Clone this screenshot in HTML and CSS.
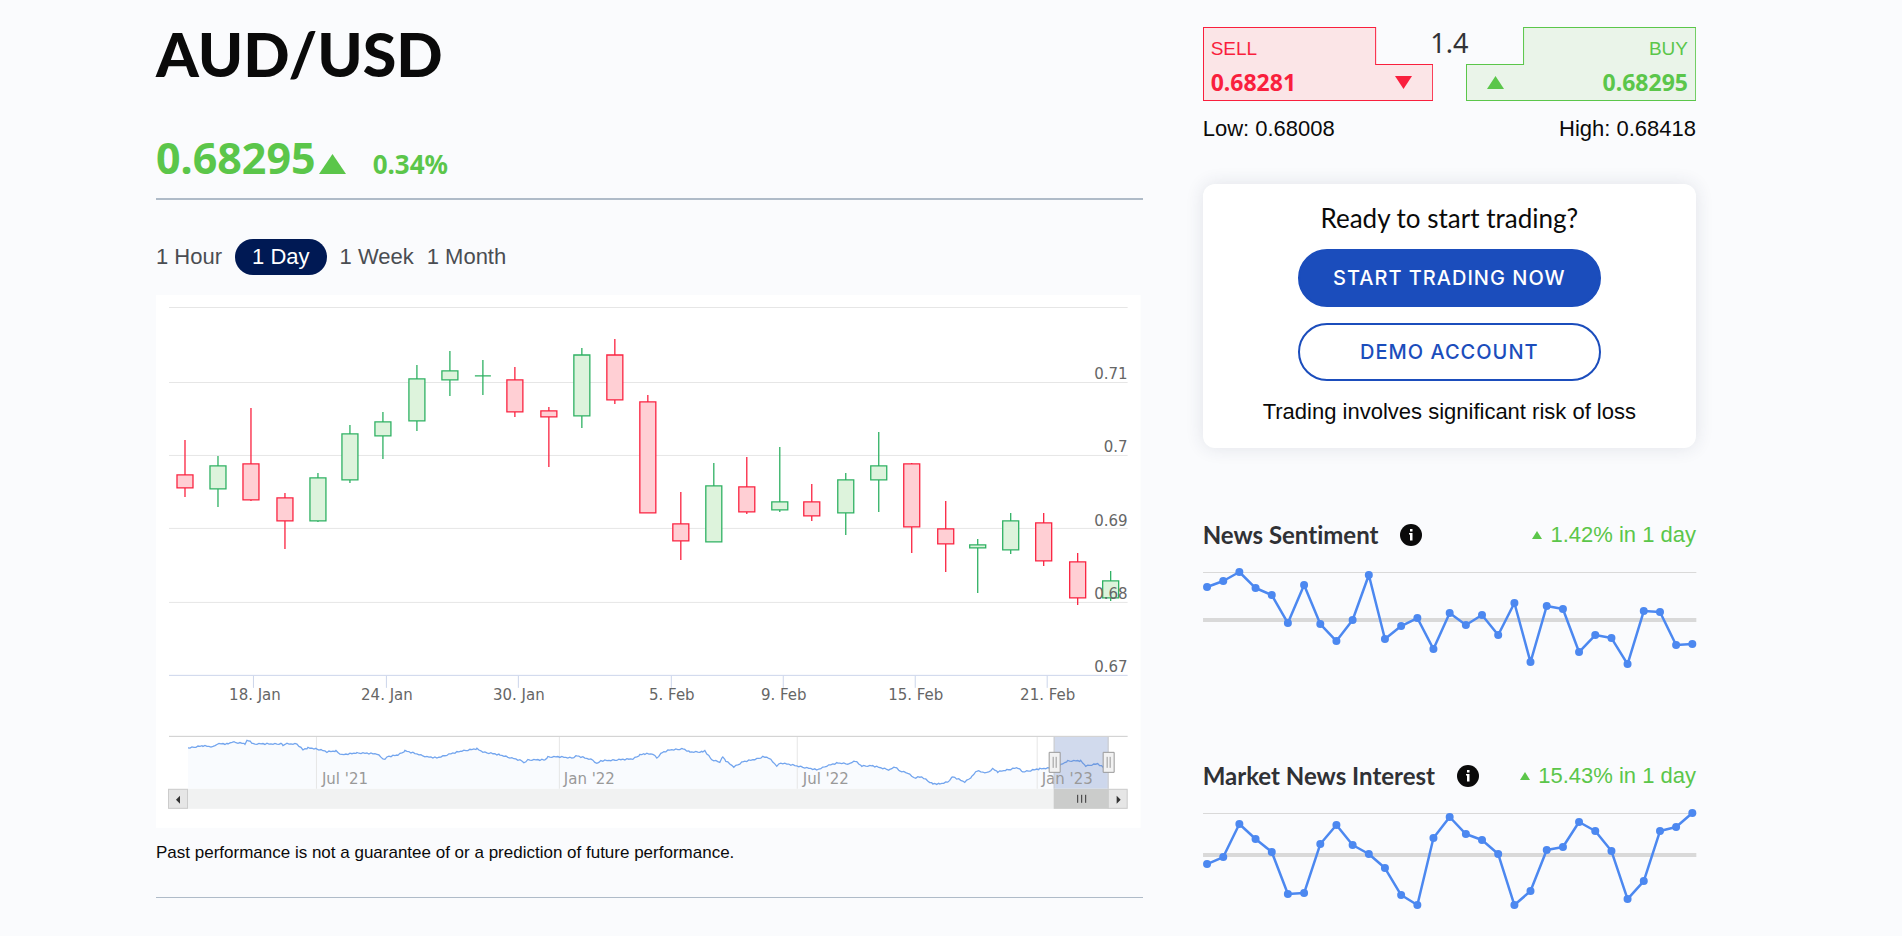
FILE: index.html
```html
<!DOCTYPE html>
<html lang="en">
<head>
<meta charset="utf-8">
<title>AUD/USD</title>
<link rel="stylesheet" href="styles.css">
</head>
<body>
<div class="page">
  <main class="instrument">
    <h1 class="pair">AUD/USD</h1>
    <div class="quote">
      <span class="quote-price">0.68295</span>
      <svg class="quote-arrow" width="27" height="20" viewBox="0 0 27 20" aria-hidden="true"><path d="M13.500 0L27 20H0z"/></svg>
      <span class="quote-change">0.34%</span>
    </div>
    <nav class="ranges" aria-label="Chart range">
      <button class="range" type="button">1 Hour</button>
      <button class="range range-active" type="button">1 Day</button>
      <button class="range" type="button">1 Week</button>
      <button class="range" type="button">1 Month</button>
    </nav>
    <svg class="chart" viewBox="0 0 987 533" role="img" aria-label="AUD/USD daily candlestick chart">
      <rect class="plot" width="985" height="533"/>
      <path class="grid" d="M13 12.5H972M13 87.5H972M13 160.5H972M13 233.5H972M13 307.5H972"/>
      <path class="axis" d="M13 380.5H972M97.5 381v12M230.5 381v12M362.5 381v12M515.5 381v12M627.5 381v12M759.5 381v12M891.5 381v12"/>
      <g id="candles"></g>
      <g class="label label-y">
        <text x="972" y="84">0.71</text>
        <text x="972" y="157">0.7</text>
        <text x="972" y="231">0.69</text>
        <text x="972" y="304">0.68</text>
        <text x="972" y="377">0.67</text>
      </g>
      <g class="label label-x">
        <text x="99" y="405">18. Jan</text>
        <text x="231" y="405">24. Jan</text>
        <text x="363" y="405">30. Jan</text>
        <text x="516" y="405">5. Feb</text>
        <text x="628" y="405">9. Feb</text>
        <text x="760" y="405">15. Feb</text>
        <text x="892" y="405">21. Feb</text>
      </g>
      <path class="nav-area" id="nav-area"/>
      <path class="grid" d="M160.5 442v52M403.5 442v52M641.5 442v52M881.5 442v52"/>
      <path class="nav-line" id="nav-line"/>
      <rect class="nav-mask" x="898" y="442" width="55" height="52"/>
      <g class="label label-nav">
        <text x="166" y="489">Jul '21</text>
        <text x="408" y="489">Jan '22</text>
        <text x="647" y="489">Jul '22</text>
        <text x="886" y="489">Jan '23</text>
      </g>
      <path class="nav-outline" d="M13 441.5H972M898.5 442v52M952.5 442v52"/>
      <rect class="scroll-track" x="12" y="494" width="960" height="20"/>
      <rect class="scroll-button" x="12.5" y="494.5" width="19" height="19"/>
      <rect class="scroll-button" x="952.5" y="494.5" width="19" height="19"/>
      <rect class="scroll-thumb" x="898" y="494" width="55" height="20"/>
      <path class="scroll-arrow" d="M20 505l4-4v8zM965 505l-4-4v8z"/>
      <path class="scroll-rifles" d="M922 500v8M926 500v8M930 500v8"/>
      <g class="nav-handle">
        <path d="M893.5 457.5h11v20h-11zM947.5 457.5h11v20h-11z"/>
        <path d="M897.5 462v11M900.5 462v11M951.5 462v11M954.5 462v11"/>
      </g>
    </svg>
    <p class="disclaimer">Past performance is not a guarantee of or a prediction of future performance.</p>
  </main>

  <aside class="side">
    <div class="dealing">
      <button class="deal deal-sell" type="button">
        <svg class="deal-shape" viewBox="0 0 230 74" preserveAspectRatio="none" aria-hidden="true"><path d="M.5.5H172.5V37.5H229.5V73.5H.5z"/></svg>
        <span class="deal-side">SELL</span>
        <span class="deal-row"><span class="deal-price">0.68281</span><svg class="deal-arrow" width="17" height="13" viewBox="0 0 17 13" aria-hidden="true"><path d="M0 0H17L8.500 13z"/></svg></span>
      </button>
      <span class="spread">1.4</span>
      <button class="deal deal-buy" type="button">
        <svg class="deal-shape" viewBox="0 0 230 74" preserveAspectRatio="none" aria-hidden="true"><path d="M57.500.5H229.5V73.5H.5V37.5H57.500z"/></svg>
        <span class="deal-side">BUY</span>
        <span class="deal-row"><svg class="deal-arrow" width="17" height="13" viewBox="0 0 17 13" aria-hidden="true"><path d="M8.500 0L17 13H0z"/></svg><span class="deal-price">0.68295</span></span>
      </button>
    </div>
    <div class="extremes"><span>Low: 0.68008</span><span>High: 0.68418</span></div>

    <section class="card">
      <h2 class="card-title">Ready to start trading?</h2>
      <button class="cta cta-primary" type="button">START TRADING NOW</button>
      <button class="cta" type="button">DEMO ACCOUNT</button>
      <p class="card-note">Trading involves significant risk of loss</p>
    </section>

    <section class="metric">
      <div class="metric-head">
        <h3 class="metric-title">News Sentiment</h3>
        <svg class="info" width="22" height="22" viewBox="0 0 22 22" role="img" aria-label="Information"><circle cx="11" cy="11" r="11"/><path d="M10 5h2.500v2.500H10zM9 9h3.500v7.500H10V10.500H9z"/></svg>
        <span class="metric-change"><svg width="10" height="8" viewBox="0 0 10 8" aria-hidden="true"><path d="M5 0l5 8H0z"/></svg>1.42% in 1 day</span>
      </div>
      <svg class="spark" viewBox="0 0 493 112" role="img" aria-label="News sentiment trend">
        <path class="spark-top" d="M0 11.500H493"/><path class="spark-mid" d="M0 59H493"/><g id="sentiment"></g>
      </svg>
    </section>

    <section class="metric">
      <div class="metric-head">
        <h3 class="metric-title">Market News Interest</h3>
        <svg class="info" width="22" height="22" viewBox="0 0 22 22" role="img" aria-label="Information"><circle cx="11" cy="11" r="11"/><path d="M10 5h2.500v2.500H10zM9 9h3.500v7.500H10V10.500H9z"/></svg>
        <span class="metric-change"><svg width="10" height="8" viewBox="0 0 10 8" aria-hidden="true"><path d="M5 0l5 8H0z"/></svg>15.43% in 1 day</span>
      </div>
      <svg class="spark" viewBox="0 0 493 112" role="img" aria-label="Market news interest trend">
        <path class="spark-top" d="M0 11.500H493"/><path class="spark-mid" d="M0 53H493"/><g id="interest"></g>
      </svg>
    </section>
  </aside>
</div>
<script src="charts.js"></script>
</body>
</html>
```

FILE: styles.css
```css
* { box-sizing: border-box; }
body {
  margin: 0;
  background: #fafbfd;
  color: #0a0a0a;
  font-family: "Liberation Sans", Arial, sans-serif;
  font-size: 22px;
}
h1, h2, h3, p { margin: 0; }
button { font: inherit; color: inherit; background: none; border: 0; padding: 0; cursor: pointer; }

.page {
  display: grid;
  grid-template-columns: 2fr 1fr;
  gap: 60px;
  padding: 0 206px 0 156px;
}

/* Instrument column */
.instrument { border-bottom: 1px solid #afbbc8; align-self: start; }
.pair {
  padding-top: 16px;
  font: 900 61px/76px Lato, sans-serif;
}
.quote {
  display: flex;
  align-items: baseline;
  gap: 3px;
  margin-top: 38px;
  padding-bottom: 6px;
  border-bottom: 2px solid #afbbc8;
  color: #5bc64a;
  font: 700 43px/56px "Noto Sans", sans-serif;
}
.quote-arrow { fill: #5bc64a; margin-bottom: -3px; }
.quote-change { margin-left: 24px; font-size: 26px; }

.ranges { display: flex; gap: 13px; margin-top: 39px; color: #4a4d52; }
.range { line-height: 36px; }
.range-active { padding: 0 17px; border-radius: 18px; background: #001954; color: #fff; }

.chart { display: block; width: 100%; margin-top: 20px; }
.plot { fill: #fff; }
.grid { stroke: #e6e6e6; fill: none; }
.axis { stroke: #ccd6eb; fill: none; }
.label { font: 15px "DejaVu Sans", sans-serif; fill: #666; }
.label-y { text-anchor: end; }
.label-x { text-anchor: middle; }
.label-nav { fill: #999; }
.candle-up { fill: #ddf3dc; stroke: #2fb163; }
.candle-down { fill: #ffcfd4; stroke: #fa2340; }
.candle-up, .candle-down { stroke-width: 1.3; }
.nav-area { fill: #f9fbfe; }
.nav-line { fill: none; stroke: #73a5ee; stroke-width: 1.3; }
.nav-mask { fill: #6685c2; fill-opacity: .3; }
.nav-outline { fill: none; stroke: #ccc; }
.nav-handle { fill: #f2f2f2; stroke: #999; }
.scroll-track { fill: #f1f2f2; }
.scroll-button { fill: #e6e6e6; stroke: #ccc; }
.scroll-thumb { fill: #cbcccb; }
.scroll-arrow { fill: #333; }
.scroll-rifles { stroke: #333; }

.disclaimer { padding: 15px 0 34px; font-size: 17px; line-height: 20px; }

/* Side column */
.side { padding-top: 27px; }
.dealing {
  position: relative;
  display: grid;
  grid-template-columns: 1fr 1fr;
  gap: 33px;
}
.deal {
  position: relative;
  display: flex;
  flex-direction: column;
  justify-content: flex-start;
  padding: 8px;
  height: 74px;
  text-align: left;
}
.deal-sell { color: #f91f3d; fill: #fbe5e7; stroke: #f91f3d; }
.deal-buy { color: #5bc64a; fill: #eaf4e9; stroke: #5bc64a; align-items: flex-end; }
.deal-shape { position: absolute; inset: 0; width: 100%; height: 100%; }
.deal-side { position: relative; font-size: 19px; line-height: 28px; }
.deal-row {
  position: relative;
  display: flex;
  align-items: center;
  justify-content: space-between;
  width: 100%;
  padding-right: 13px;
}
.deal-buy .deal-row { padding: 0 0 0 13px; }
.deal-arrow { fill: currentColor; stroke: none; }
.deal-price { font: 700 23px/38px "Noto Sans", sans-serif; }
.spread {
  position: absolute;
  top: 0;
  left: 50%;
  transform: translateX(-50%);
  color: #323336;
  font: 27px/32px "Noto Sans", sans-serif;
}
.extremes { display: flex; justify-content: space-between; margin-top: 16px; line-height: 24px; }

.card {
  display: flex;
  flex-direction: column;
  align-items: center;
  gap: 16px;
  margin-top: 43px;
  padding: 19px 24px 18px;
  border-radius: 12px;
  background: #fff;
  box-shadow: 0 0 18px rgba(40, 50, 80, .12);
}
.card-title { font: 400 26px/30px Lato, sans-serif; }
.cta {
  width: 303px;
  height: 58px;
  border: 2px solid #1b4dbc;
  border-radius: 29px;
  color: #1b4dbc;
  font: 500 20px/24px Inter, sans-serif;
  letter-spacing: 1px;
}
.cta-primary { background: #1b4dbc; color: #fff; }
.card-note { padding-bottom: 3px; line-height: 30px; }

.metric { margin-top: 72px; }
.metric + .metric { margin-top: 88px; }
.metric-head { display: flex; align-items: center; line-height: 30px; }
.metric-title { font: 700 24px/30px Lato, sans-serif; font-variant-ligatures: none; color: #303135; }
.info { margin-left: 22px; fill: #0a0a0a; }
.info path { fill: #fff; }
.metric-change { display: flex; align-items: center; gap: 8px; margin-left: auto; color: #5bc64a; fill: #5bc64a; }
.spark { display: block; width: 100%; margin-top: 11px; overflow: visible; }
.spark-top { stroke: #d9d9d9; }
.spark-mid { stroke: #d9d9d9; stroke-width: 4; }
.spark-line { fill: none; stroke: #4c88f0; stroke-width: 2.5; stroke-linejoin: round; }
.spark-dot { fill: #4c88f0; }
```

FILE: charts.js
```js
const SVG = "http://www.w3.org/2000/svg";

function add(parent, name, attributes) {
  const node = document.createElementNS(SVG, name);
  for (const key in attributes) node.setAttribute(key, attributes[key]);
  parent.appendChild(node);
}

// x, high, body top, body bottom, low, direction
const candles = [
  [29, 145, 180, 193, 202, "down"], [62, 161, 171, 194, 212, "up"],
  [95, 113, 169, 205, 206, "down"], [129, 198, 203, 226, 254, "down"],
  [162, 178, 183, 226, 227, "up"], [194, 130, 139, 185, 188, "up"],
  [227, 117, 127, 141, 164, "up"], [261, 70, 84, 126, 136, "up"],
  [294, 56, 76, 85, 101, "up"], [327, 65, 81, 81, 100, "up"],
  [359, 72, 85, 117, 122, "down"], [393, 112, 116, 122, 172, "down"],
  [426, 53, 60, 121, 133, "up"], [459, 44, 60, 105, 109, "down"],
  [492, 100, 107, 218, 218, "down"], [525, 197, 229, 246, 265, "down"],
  [558, 168, 191, 247, 247, "up"], [591, 162, 192, 217, 219, "down"],
  [624, 152, 207, 215, 217, "up"], [656, 189, 207, 221, 226, "down"],
  [690, 178, 185, 218, 240, "up"], [723, 137, 171, 185, 217, "up"],
  [756, 168, 169, 232, 258, "down"], [790, 206, 234, 249, 277, "down"],
  [822, 244, 250, 253, 298, "up"], [855, 218, 226, 255, 259, "up"],
  [888, 218, 228, 266, 271, "down"], [922, 258, 267, 303, 310, "down"],
  [955, 276, 286, 303, 306, "up"]
];
const candleGroup = document.getElementById("candles");
for (const [x, high, top, bottom, low, direction] of candles) {
  add(candleGroup, "path", {
    class: "candle-" + direction,
    d: `M${x} ${high}V${top}M${x} ${bottom}V${low}M${x - 8} ${top}h16V${bottom}h-16z`
  });
}

// Two-year closing line of the navigator
const history = [
  [32, 453], [47, 451], [57, 452], [61, 449], [72, 449], [76, 447], [89, 449], [91, 446], [94, 446],
  [97, 449], [126, 449], [127, 451], [129, 449], [141, 449], [147, 455], [152, 453], [161, 454],
  [171, 457], [180, 456], [186, 460], [201, 458], [221, 459], [229, 465], [231, 462], [242, 460],
  [249, 456], [261, 459], [271, 462], [281, 463], [291, 460], [306, 456], [321, 454], [327, 457],
  [344, 460], [366, 466], [368, 468], [372, 465], [389, 465], [392, 462], [404, 462], [416, 463],
  [421, 461], [437, 465], [441, 469], [445, 466], [461, 465], [477, 464], [484, 460], [489, 459],
  [497, 459], [501, 463], [506, 458], [514, 455], [527, 454], [534, 457], [547, 457], [549, 456],
  [556, 465], [564, 467], [567, 462], [570, 466], [578, 472], [587, 467], [601, 464], [607, 462],
  [613, 463], [621, 471], [625, 468], [641, 471], [661, 475], [671, 471], [682, 468], [694, 469],
  [699, 466], [706, 471], [717, 471], [734, 475], [739, 472], [744, 476], [752, 478], [758, 483],
  [766, 482], [777, 489], [784, 489], [792, 487], [797, 482], [809, 487], [816, 482], [821, 476],
  [831, 478], [837, 474], [842, 477], [851, 475], [862, 473], [867, 477], [884, 474], [894, 473],
  [905, 470], [912, 466], [925, 466], [930, 471], [942, 469], [947, 472], [952, 471]
];
const wobble = [0, .5, -.4, .3, .6, -.5, .1, -.3, .6, -.6, .2];
const closes = [];
for (let i = 0; i < history.length - 1; i++) {
  const [x0, y0] = history[i];
  const [x1, y1] = history[i + 1];
  for (let x = x0; x < x1; x += 2) {
    const y = y0 + (y1 - y0) * (x - x0) / (x1 - x0) + wobble[closes.length % wobble.length];
    closes.push(x + " " + y.toFixed(1));
  }
}
const closeLine = "M" + closes.join("L");
document.getElementById("nav-line").setAttribute("d", closeLine);
document.getElementById("nav-area").setAttribute("d", closeLine + "V494H32z");

function sparkline(id, values) {
  const group = document.getElementById(id);
  const points = values.map((y, i) => [(4 + i * 485 / (values.length - 1)).toFixed(1), y]);
  add(group, "polyline", { class: "spark-line", points: points.join(" ") });
  for (const [cx, cy] of points) add(group, "circle", { class: "spark-dot", cx, cy, r: 4 });
}
sparkline("sentiment", [26, 20, 11, 27, 34, 62, 24, 63, 80, 59, 14, 78, 65, 57, 88, 52, 64, 54, 74, 42, 101, 45, 48, 91, 74, 77, 103, 50, 51, 84, 83]);
sparkline("interest", [62, 55, 22, 37, 50, 92, 91, 42, 23, 43, 52, 66, 93, 103, 36, 15, 32, 38, 52, 103, 89, 48, 45, 20, 29, 49, 97, 79, 29, 25, 11]);
```
